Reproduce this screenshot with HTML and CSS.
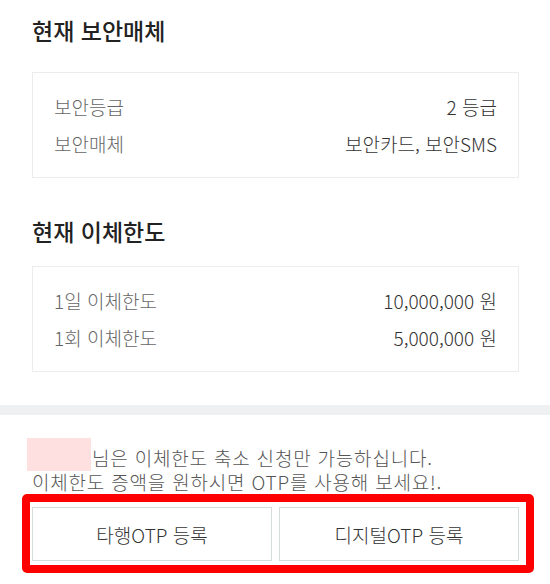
FILE: index.html
```html
<!DOCTYPE html>
<html lang="ko">
  <head>
    <meta charset="utf-8"/>
    <title>보안매체 및 이체한도</title>
    <link rel="stylesheet" href="styles.css">
  </head>
  <body>
    <div class="section section-media">
      <h2 class="section-title">현재 보안매체</h2>
      <div class="info-box">
        <div class="info-row">
          <span class="info-label">보안등급</span>
          <span class="info-value">2 등급</span>
        </div>
        <div class="info-row">
          <span class="info-label">보안매체</span>
          <span class="info-value">보안카드, 보안SMS</span>
        </div>
      </div>
    </div>

    <div class="section section-limit">
      <h2 class="section-title">현재 이체한도</h2>
      <div class="info-box">
        <div class="info-row">
          <span class="info-label">1일 이체한도</span>
          <span class="info-value">10,000,000 원</span>
        </div>
        <div class="info-row">
          <span class="info-label">1회 이체한도</span>
          <span class="info-value">5,000,000 원</span>
        </div>
      </div>
    </div>

    <div class="divider"></div>

    <div class="notice">
      <p class="notice-text"><span class="masked-name"></span>님은 이체한도 축소 신청만 가능하십니다.<br/>이체한도 증액을 원하시면 OTP를 사용해 보세요!.</p>
      <div class="otp-buttons">
        <button type="button" class="otp-btn">타행OTP 등록</button>
        <button type="button" class="otp-btn">디지털OTP 등록</button>
        <div class="highlight"></div>
      </div>
    </div>
  </body>
</html>
```

FILE: styles.css
```css
body {
  background: #ffffff;
  font-family: "Noto Sans CJK KR", "Noto Sans", sans-serif;
  color: #333333;
  margin: 0;
  width: 550px;
}
.section {
  padding: 0 31px 0 32px;
}
.section-media {
  padding-top: 15px;
}
.section-limit {
  padding-top: 38px;
}
.section-title {
  font-size: 23px;
  font-weight: 500;
  line-height: 30px;
  color: #222222;
  margin: 0;
}
.info-box {
  border: 1px solid #ececec;
  padding: 15px 21px;
  margin-top: 27px;
}
.section-limit .info-box {
  margin-top: 20px;
}
.info-row {
  display: flex;
  justify-content: space-between;
  font-size: 19px;
  font-weight: 300;
  line-height: 37px;
}
.info-label {
  color: #666666;
}
.info-value {
  color: #333333;
}
.divider {
  height: 10px;
  background: #eef0f2;
  margin-top: 33px;
}
.notice {
  padding: 31px 31px 23px 32px;
}
.notice-text {
  margin: 0;
  font-size: 19px;
  font-weight: 300;
  line-height: 24px;
  letter-spacing: 0.8px;
  color: #555555;
}
.masked-name {
  display: inline-block;
  width: 64px;
  height: 33px;
  margin: -13px 1px -1px -5px;
  vertical-align: middle;
  background: #ffe0e0;
}
.otp-buttons {
  position: relative;
  display: flex;
  gap: 7px;
  margin-top: 13px;
}
.otp-btn {
  flex: 1;
  height: 54px;
  background: #ffffff;
  border: 1px solid #d4dcdc;
  font-family: inherit;
  font-size: 19px;
  font-weight: 300;
  color: #333333;
  padding: 0;
}
.highlight {
  position: absolute;
  top: -13px;
  right: -15px;
  bottom: -12px;
  left: -10px;
  border: 8px solid #ff0000;
  border-radius: 5px;
  pointer-events: none;
}
```
